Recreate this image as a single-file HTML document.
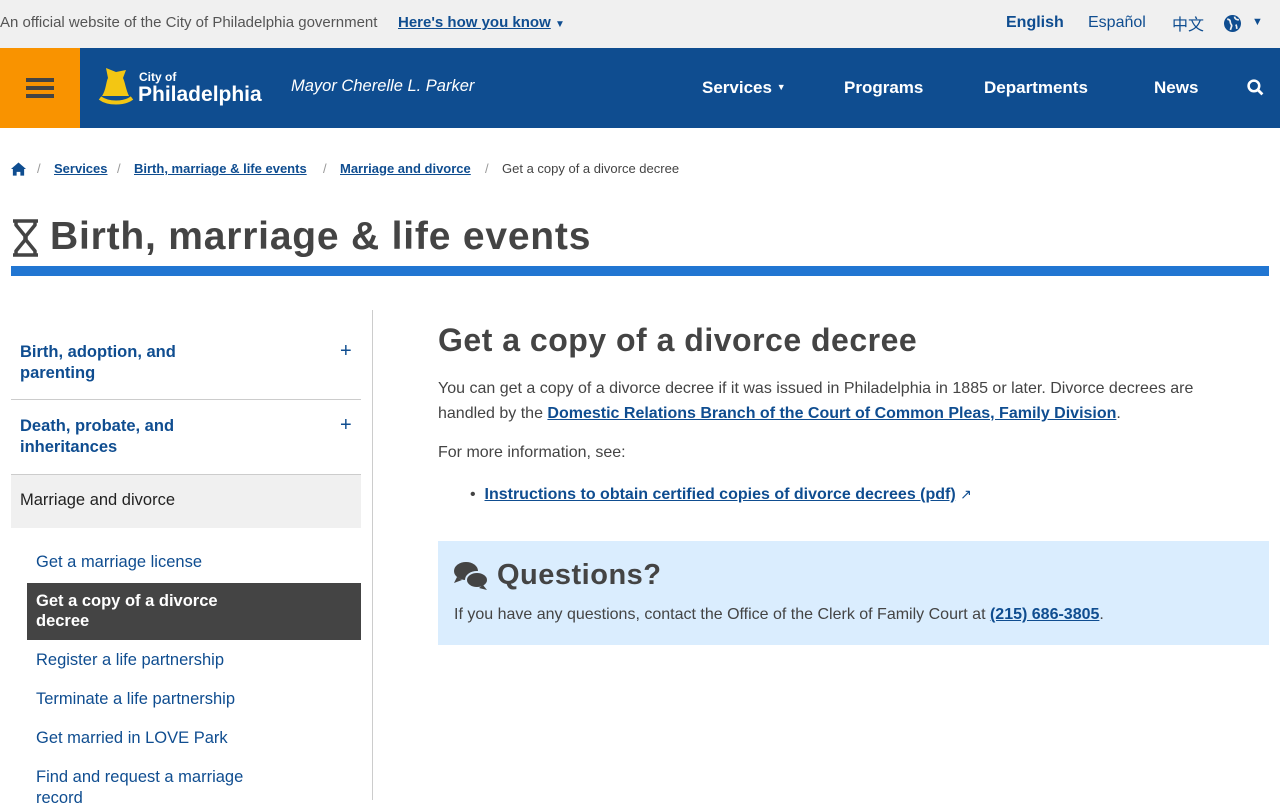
<!DOCTYPE html>
<html><head><meta charset="utf-8"><style>
*{margin:0;padding:0;box-sizing:border-box}
body{width:1280px;height:800px;overflow:hidden;font-family:"Liberation Sans",sans-serif;color:#444;background:#fff;position:relative}
a{color:#0f4d90;text-decoration:underline}
.top{height:48px;background:#f0f0f0;position:relative;font-size:15px}
.abs{position:absolute;white-space:nowrap}
.nav{height:80px;background:#0f4d90;position:relative}
.ham{position:absolute;left:0;top:0;width:80px;height:80px;background:#f99300}
.ham i{position:absolute;left:26px;width:28px;height:4px;background:#444}
.navl{color:#fff;font-weight:bold;font-size:17px;top:30px}
.bc{font-size:13px;top:161px}
.bc a{font-weight:bold;font-size:13px}
.side a{text-decoration:none;color:#0f4d90;font-size:16.5px;line-height:21px}
</style></head><body>
<div class="top">
<div class="abs" style="left:0;top:14px;color:#555;font-size:15px">An official website of the City of Philadelphia government</div>
<div class="abs" style="left:398px;top:14px;font-size:15px"><a style="font-weight:bold">Here's how you know</a> <span style="color:#0f4d90;font-size:10px">▼</span></div>
<div class="abs" style="left:1006px;top:14px;font-weight:bold;color:#0f4d90;font-size:16px">English</div>
<div class="abs" style="left:1088px;top:14px;color:#0f4d90;font-size:16px">Español</div>
<div class="abs" style="left:1172px;top:11px;color:#0f4d90;font-size:16px;font-family:'Noto Sans CJK SC',sans-serif">中文</div>
<svg class="abs" style="left:1224px;top:15px" width="17" height="17" viewBox="0 0 16 16"><circle cx="8" cy="8" r="8" fill="#0f4d90"/><path d="M3 4c2 0 3 1 3 3s2 2 1 4l-1 3M10 1.5c0 2 2 3 4 3M11 9c1 1 1 3 1 4" stroke="#f0f0f0" stroke-width="1.6" fill="none"/></svg>
<div class="abs" style="left:1252px;top:16px;color:#0f4d90;font-size:11px">▼</div>
</div>
<div class="nav">
<div class="ham"><i style="top:30px"></i><i style="top:38px"></i><i style="top:46px"></i></div>
<svg class="abs" style="left:98px;top:18px" width="36" height="42" viewBox="0 0 36 42"><path d="M8 2l10 4 10-2-3 8c2 4 3 12 6 18H4c4-6 4-14 6-18z" fill="#f3c613"/><path d="M2 32c8 6 24 6 32 0" stroke="#f3c613" stroke-width="4" fill="none"/></svg>
<div class="abs" style="left:139px;top:22px;color:#fff;font-size:12px;font-weight:bold">City of</div>
<div class="abs" style="left:138px;top:35px;color:#fff;font-size:21px;font-weight:bold">Philadelphia</div>
<div class="abs" style="left:291px;top:29px;color:#fff;font-size:16.5px;font-style:italic">Mayor Cherelle L. Parker</div>
<div class="abs navl" style="left:702px">Services <span style="font-size:9px;vertical-align:3px">▼</span></div>
<div class="abs navl" style="left:844px">Programs</div>
<div class="abs navl" style="left:984px">Departments</div>
<div class="abs navl" style="left:1154px">News</div>
<svg class="abs" style="left:1247px;top:79px" width="0" height="0"></svg>
<svg class="abs" style="left:1247px;top:79px" width="0" height="0"></svg>
<svg class="abs" style="left:1247px;top:31px" width="17" height="17" viewBox="0 0 16 16"><circle cx="6.5" cy="6.5" r="5" stroke="#fff" stroke-width="2.4" fill="none"/><path d="M10 10l4.5 4.5" stroke="#fff" stroke-width="2.6"/></svg>
</div>
<svg class="abs" style="left:11px;top:162px" width="15" height="14" viewBox="0 0 16 14"><path d="M8 0L0 7h2v7h4v-4h4v4h4V7h2z" fill="#0f4d90"/></svg>
<div class="abs bc" style="left:37px;color:#999">/</div>
<div class="abs bc" style="left:54px"><a>Services</a></div>
<div class="abs bc" style="left:117px;color:#999">/</div>
<div class="abs bc" style="left:134px"><a>Birth, marriage &amp; life events</a></div>
<div class="abs bc" style="left:323px;color:#999">/</div>
<div class="abs bc" style="left:340px"><a>Marriage and divorce</a></div>
<div class="abs bc" style="left:485px;color:#999">/</div>
<div class="abs bc" style="left:502px;color:#444">Get a copy of a divorce decree</div>
<svg class="abs" style="left:11px;top:219px" width="29" height="38" viewBox="0 0 29 38"><path d="M2 2h25M2 36h25M5 2v4l9 11v4l-9 11v4M24 2v4l-9 11v4l9 11v4" stroke="#444" stroke-width="3.5" fill="none" stroke-linejoin="round"/></svg>
<div class="abs" style="left:50px;top:215px;font-size:39px;color:#444;font-weight:bold;letter-spacing:0.8px">Birth, marriage &amp; life events</div>
<div class="abs" style="left:11px;top:266px;width:1258px;height:10px;background:#2176d2"></div>
<div class="abs" style="left:372px;top:310px;width:1px;height:490px;background:#ccc"></div>
<div class="side">
<a class="abs" style="left:20px;top:342px;font-weight:bold">Birth, adoption, and<br>parenting</a>
<div class="abs" style="left:340px;top:340px;color:#0f4d90;font-size:20px">+</div>
<div class="abs" style="left:11px;top:399px;width:350px;height:1px;background:#ccc"></div>
<a class="abs" style="left:20px;top:416px;font-weight:bold">Death, probate, and<br>inheritances</a>
<div class="abs" style="left:340px;top:414px;color:#0f4d90;font-size:20px">+</div>
<div class="abs" style="left:11px;top:474px;width:350px;height:54px;background:#f0f0f0;border-top:1px solid #ccc"></div>
<div class="abs" style="left:20px;top:491px;color:#222;font-size:16.5px">Marriage and divorce</div>
<a class="abs" style="left:36px;top:552px">Get a marriage license</a>
<div class="abs" style="left:27px;top:583px;width:334px;height:57px;background:#444"></div>
<div class="abs" style="left:36px;top:591px;color:#fff;font-size:16.5px;line-height:20px;font-weight:bold">Get a copy of a divorce<br>decree</div>
<a class="abs" style="left:36px;top:650px">Register a life partnership</a>
<a class="abs" style="left:36px;top:689px">Terminate a life partnership</a>
<a class="abs" style="left:36px;top:728px">Get married in LOVE Park</a>
<a class="abs" style="left:36px;top:767px">Find and request a marriage<br>record</a>
</div>
<div class="abs" style="left:438px;top:322px;font-size:32px;font-weight:bold;color:#444;letter-spacing:0.5px">Get a copy of a divorce decree</div>
<div class="abs" style="left:438px;top:376px;font-size:16px;line-height:25px;white-space:normal;width:800px">You can get a copy of a divorce decree if it was issued in Philadelphia in 1885 or later. Divorce decrees are handled by the <a style="font-weight:bold">Domestic Relations Branch of the Court of Common Pleas, Family Division</a>.</div>
<div class="abs" style="left:438px;top:444px;font-size:16px">For more information, see:</div>
<div class="abs" style="left:470px;top:486px;font-size:16px">• &nbsp;<a style="font-weight:bold">Instructions to obtain certified copies of divorce decrees (pdf)</a> <span style="color:#0f4d90;font-size:14px">↗</span></div>
<div class="abs" style="left:438px;top:541px;width:831px;height:104px;background:#daedfe"></div>
<svg class="abs" style="left:453px;top:561px" width="36" height="30" viewBox="0 0 36 30"><ellipse cx="13" cy="10" rx="12" ry="9" fill="#444"/><path d="M4 16l-3 6 8-3z" fill="#444"/><ellipse cx="24" cy="19" rx="11" ry="8" fill="#444" stroke="#daedfe" stroke-width="2"/><path d="M30 24l4 5-8-2z" fill="#444"/></svg>
<div class="abs" style="left:497px;top:559px;font-size:29px;font-weight:bold;color:#444;letter-spacing:0.5px">Questions?</div>
<div class="abs" style="left:454px;top:606px;font-size:16px">If you have any questions, contact the Office of the Clerk of Family Court at <a style="font-weight:bold">(215) 686-3805</a>.</div>
</body></html>
